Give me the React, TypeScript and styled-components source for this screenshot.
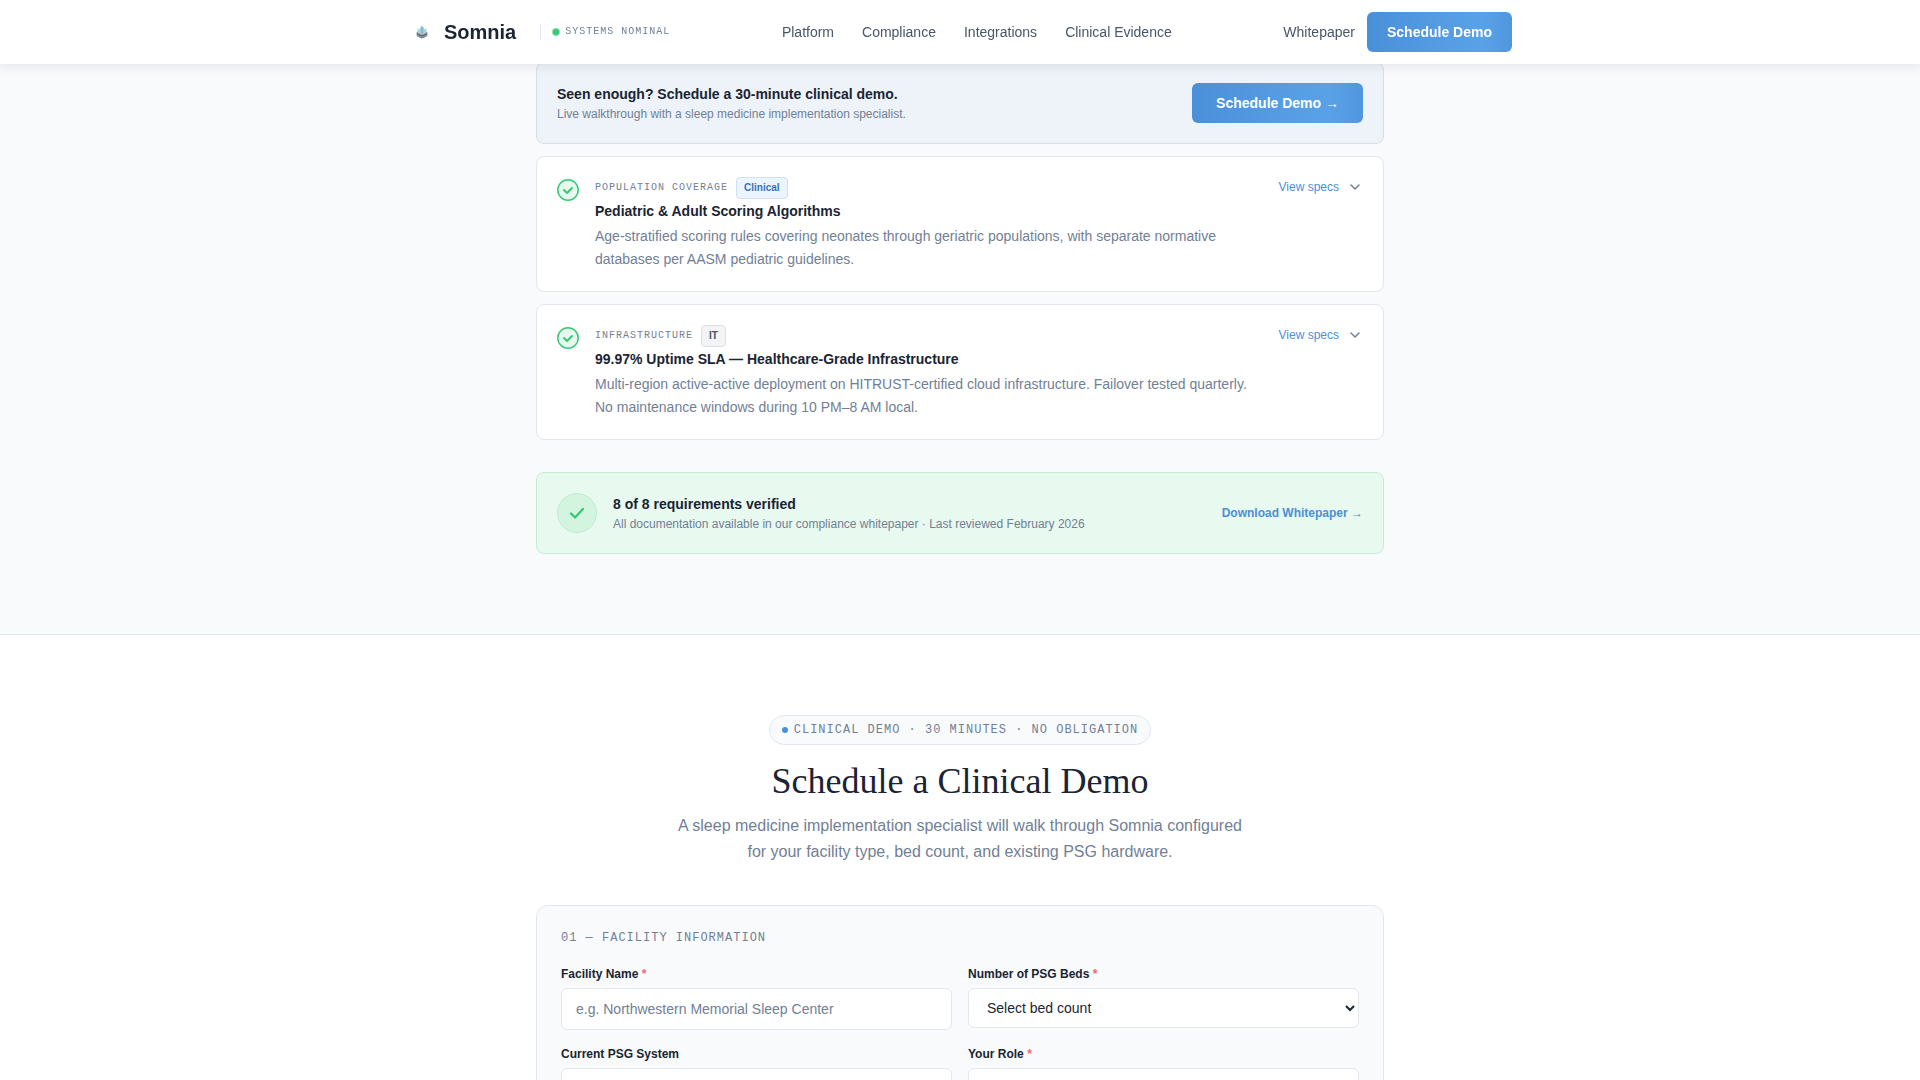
import React from "react";
import styled, { createGlobalStyle, css } from "styled-components";

const sans = `"Liberation Sans", Arial, sans-serif`;
const mono = `"Liberation Mono", "Courier New", monospace`;
const serif = `"Liberation Serif", "Times New Roman", serif`;

const color = {
  ink: "#1a2433",
  body: "#4a5568",
  muted: "#718096",
  line: "#e2e8ee",
  surface: "#f8fafc",
  blue: "#4a90d9",
  green: "#38c976",
};

const GlobalStyle = createGlobalStyle`
  *, *::before, *::after { box-sizing: border-box; }
  body { margin: 0; background: #fff; color: ${color.ink}; font-family: ${sans}; font-size: 14px; line-height: 20px; }
  h1, h2, h3, p { margin: 0; }
  a { color: inherit; text-decoration: none; }
  button, input, select { font-family: inherit; }
`;

const Header = styled.header`
  position: fixed;
  inset: 0 0 auto;
  z-index: 10;
  background: #fff;
  box-shadow: 0 1px 12px rgba(26, 32, 44, 0.12);
`;

const HeaderInner = styled.div`
  display: flex;
  align-items: center;
  justify-content: space-between;
  max-width: 1152px;
  height: 64px;
  margin: 0 auto;
  padding: 0 24px;
`;

const Group = styled.div`
  display: flex;
  align-items: center;
  gap: ${(p: { $gap: number }) => p.$gap}px;
`;

const Brand = styled.a`
  display: flex;
  align-items: center;
  gap: 8px;
  font-size: 20px;
  font-weight: 700;
`;

const monoLabel = css`
  font-family: ${mono};
  letter-spacing: 1px;
  text-transform: uppercase;
  color: ${color.muted};
`;

const Status = styled.div`
  ${monoLabel}
  display: flex;
  align-items: center;
  gap: 6px;
  padding-left: 12px;
  border-left: 1px solid ${color.line};
  font-size: 10px;
  line-height: 16px;
`;

const Dot = styled.span<{ $color: string; $halo?: boolean }>`
  width: 6px;
  height: 6px;
  border-radius: 50%;
  background: ${(p) => p.$color};
  box-shadow: ${(p) => (p.$halo ? "0 0 0 1px rgba(56, 201, 118, 0.6)" : "none")};
`;

const Nav = styled.nav`
  display: flex;
  gap: 28px;
  color: ${color.body};
`;

const TextLink = styled.a`
  color: ${color.body};
`;

const PrimaryButton = styled.button<{ $pad: number }>`
  height: 40px;
  padding: 0 ${(p) => p.$pad}px;
  border: 0;
  border-radius: 6px;
  background: linear-gradient(90deg, #4a90d9 0%, #5aa2e8 80%, #5096df 100%);
  color: #fff;
  font-size: 14px;
  font-weight: 700;
  white-space: nowrap;
  cursor: pointer;
`;

const Section = styled.section<{ $tinted?: boolean }>`
  padding: ${(p) => (p.$tinted ? "62px 0 80px" : "80px 0")};
  background: ${(p) => (p.$tinted ? color.surface : "#fff")};
  border-bottom: 1px solid ${color.line};
`;

const Column = styled.div`
  display: flex;
  flex-direction: column;
  gap: 12px;
  max-width: 896px;
  margin: 0 auto;
  padding: 0 24px;
`;

const Panel = styled.div<{ $tone: "blue" | "green" }>`
  display: flex;
  align-items: center;
  gap: 16px;
  padding: 20px;
  border: 1px solid ${(p) => (p.$tone === "blue" ? "#d5e0ea" : "#c3ecd3")};
  border-radius: 8px;
  background: ${(p) => (p.$tone === "blue" ? "#edf3f8" : "#e8f9ef")};
  margin-top: ${(p) => (p.$tone === "green" ? 20 : 0)}px;
`;

const PanelText = styled.div`
  display: flex;
  flex: 1;
  flex-direction: column;
  gap: 2px;
`;

const Title = styled.h3`
  font-size: 14px;
  line-height: 20px;
  font-weight: 700;
`;

const Note = styled.p`
  color: ${color.muted};
  font-size: 12px;
  line-height: 16px;
`;

const Seal = styled.span`
  display: grid;
  place-items: center;
  width: 40px;
  height: 40px;
  border: 1px solid #bdebd0;
  border-radius: 50%;
  background: #d3f5e0;
`;

const StrongLink = styled.a`
  color: ${color.blue};
  font-size: 12px;
  font-weight: 700;
`;

const Card = styled.article`
  display: flex;
  align-items: flex-start;
  gap: 16px;
  padding: 20px;
  border: 1px solid ${color.line};
  border-radius: 8px;
  background: #fff;
`;

const CheckMark = styled.svg`
  flex: none;
  margin-top: 2px;
`;

const CardBody = styled.div`
  flex: 1;
`;

const CardMeta = styled.div`
  display: flex;
  align-items: center;
  gap: 8px;
  margin-bottom: 2px;
`;

const Category = styled.span`
  ${monoLabel}
  font-size: 10px;
  line-height: 20px;
`;

const Tag = styled.span<{ $clinical?: boolean }>`
  padding: 0 7px;
  border: 1px solid ${(p) => (p.$clinical ? "#cfe1f6" : "#dcdfe4")};
  border-radius: 4px;
  background: ${(p) => (p.$clinical ? "#ebf4ff" : "#f3f4f6")};
  color: ${(p) => (p.$clinical ? "#3a70b2" : color.body)};
  font-size: 10px;
  line-height: 20px;
  font-weight: 700;
`;

const Description = styled.p`
  margin-top: 4px;
  color: ${color.muted};
  line-height: 23px;
`;

const SpecsButton = styled.button`
  display: flex;
  align-items: center;
  gap: 8px;
  padding: 0;
  border: 0;
  background: none;
  color: ${color.blue};
  font-size: 12px;
  line-height: 20px;
  cursor: pointer;
`;

const Intro = styled.div`
  display: flex;
  flex-direction: column;
  align-items: center;
  margin-bottom: 28px;
  text-align: center;
`;

const Pill = styled.div`
  ${monoLabel}
  display: flex;
  align-items: center;
  gap: 6px;
  padding: 4px 12px;
  border: 1px solid ${color.line};
  border-radius: 15px;
  background: ${color.surface};
  font-size: 12px;
  line-height: 20px;
`;

const Heading = styled.h2`
  margin: 16px 0 12px;
  font-family: ${serif};
  font-size: 36px;
  line-height: 40px;
  font-weight: 400;
`;

const Lead = styled.p`
  max-width: 576px;
  color: ${color.muted};
  font-size: 16px;
  line-height: 26px;
`;

const Form = styled.form`
  padding: 24px;
  border: 1px solid ${color.line};
  border-radius: 12px;
  background: ${color.surface};
`;

const FormHeading = styled.h3`
  ${monoLabel}
  margin-bottom: 20px;
  font-size: 12px;
  line-height: 16px;
  font-weight: 400;
`;

const FieldGrid = styled.div`
  display: grid;
  grid-template-columns: 1fr 1fr;
  gap: 16px;
`;

const FieldBox = styled.div`
  display: flex;
  flex-direction: column;
  gap: 6px;
`;

const Label = styled.label`
  font-size: 12px;
  line-height: 16px;
  font-weight: 700;
`;

const Required = styled.span`
  color: #f56570;
`;

const control = css`
  width: 100%;
  padding: 0 14px;
  border: 1px solid ${color.line};
  border-radius: 6px;
  background: #fff;
  color: ${color.ink};
  font-size: 14px;
`;

const Input = styled.input`
  ${control}
  height: 42px;
  &::placeholder {
    color: ${color.muted};
  }
`;

const Select = styled.select`
  ${control}
  height: 40px;
`;

function Logo() {
  return (
    <svg width="28" height="28" viewBox="0 0 28 28" aria-hidden="true">
      <path d="M8.5 14l5.5-2.5 5.500 2.500v4L14 20.500 8.500 18z" fill="#a3adb3" />
      <path d="M9 15l5 2.500 5-2.500v1.500L14 19l-5-2.500z" fill="#59636c" />
      <path d="M9.500 18l4.500 2 4.500-2" fill="none" stroke="#7c858c" />
      <path d="M14 7.500l2 3-2 5-2-5z" fill="#7cc0d2" />
      <path d="M9.500 10l3 2 .5 4-3-1.500zM18.500 10l-3 2-.5 4 3-1.500z" fill="#a5d3df" />
    </svg>
  );
}

function Tick() {
  return (
    <svg width="18" height="18" viewBox="0 0 18 18" fill="none" stroke={color.green} strokeWidth="2.4" strokeLinecap="round" strokeLinejoin="round" aria-hidden="true">
      <path d="M3 9.500l4 4 8-8.500" />
    </svg>
  );
}

interface Requirement {
  category: string;
  tag: string;
  title: string;
  text: string;
}

const requirements: Requirement[] = [
  {
    category: "Population Coverage",
    tag: "Clinical",
    title: "Pediatric & Adult Scoring Algorithms",
    text: "Age-stratified scoring rules covering neonates through geriatric populations, with separate normative databases per AASM pediatric guidelines.",
  },
  {
    category: "Infrastructure",
    tag: "IT",
    title: "99.97% Uptime SLA — Healthcare-Grade Infrastructure",
    text: "Multi-region active-active deployment on HITRUST-certified cloud infrastructure. Failover tested quarterly. No maintenance windows during 10 PM–8 AM local.",
  },
];

function RequirementCard({ item }: { item: Requirement }) {
  return (
    <Card>
      <CheckMark width="22" height="22" viewBox="0 0 22 22" fill="none" stroke={color.green} aria-hidden="true">
        <circle cx="11" cy="11" r="10.2" fill="#e8f9ef" strokeWidth="1.5" />
        <path d="M7 11l3 3 5-5" strokeWidth="2" strokeLinecap="round" strokeLinejoin="round" />
      </CheckMark>
      <CardBody>
        <CardMeta>
          <Category>{item.category}</Category>
          <Tag $clinical={item.tag === "Clinical"}>{item.tag}</Tag>
        </CardMeta>
        <Title>{item.title}</Title>
        <Description>{item.text}</Description>
      </CardBody>
      <SpecsButton type="button">
        View specs
        <svg width="16" height="16" viewBox="0 0 16 16" fill="none" stroke={color.muted} strokeWidth="1.5" strokeLinecap="round" strokeLinejoin="round" aria-hidden="true">
          <path d="M4 6l4 4 4-4" />
        </svg>
      </SpecsButton>
    </Card>
  );
}

interface FieldProps {
  id: string;
  label: string;
  required?: boolean;
  children: React.ReactNode;
}

function Field({ id, label, required, children }: FieldProps) {
  return (
    <FieldBox>
      <Label htmlFor={id}>
        {label} {required && <Required>*</Required>}
      </Label>
      {children}
    </FieldBox>
  );
}

export default function App() {
  return (
    <>
      <GlobalStyle />
      <Header>
        <HeaderInner>
          <Group $gap={24}>
            <Brand href="#">
              <Logo />
              Somnia
            </Brand>
            <Status>
              <Dot $color={color.green} $halo />
              Systems Nominal
            </Status>
          </Group>
          <Nav>
            <TextLink href="#platform">Platform</TextLink>
            <TextLink href="#compliance">Compliance</TextLink>
            <TextLink href="#integrations">Integrations</TextLink>
            <TextLink href="#evidence">Clinical Evidence</TextLink>
          </Nav>
          <Group $gap={12}>
            <TextLink href="#whitepaper">Whitepaper</TextLink>
            <PrimaryButton type="button" $pad={20}>Schedule Demo</PrimaryButton>
          </Group>
        </HeaderInner>
      </Header>
      <main>
        <Section $tinted id="compliance">
          <Column>
            <Panel $tone="blue">
              <PanelText>
                <Title>Seen enough? Schedule a 30-minute clinical demo.</Title>
                <Note>Live walkthrough with a sleep medicine implementation specialist.</Note>
              </PanelText>
              <PrimaryButton type="button" $pad={24}>Schedule Demo →</PrimaryButton>
            </Panel>
            {requirements.map((item) => (
              <RequirementCard key={item.category} item={item} />
            ))}
            <Panel $tone="green">
              <Seal>
                <Tick />
              </Seal>
              <PanelText>
                <Title>8 of 8 requirements verified</Title>
                <Note>All documentation available in our compliance whitepaper · Last reviewed February 2026</Note>
              </PanelText>
              <StrongLink href="#whitepaper">Download Whitepaper →</StrongLink>
            </Panel>
          </Column>
        </Section>
        <Section id="demo">
          <Column>
            <Intro>
              <Pill>
                <Dot $color={color.blue} />
                Clinical Demo · 30 Minutes · No Obligation
              </Pill>
              <Heading>Schedule a Clinical Demo</Heading>
              <Lead>
                A sleep medicine implementation specialist will walk through Somnia configured for your facility type, bed count, and existing PSG hardware.
              </Lead>
            </Intro>
            <Form>
              <FormHeading>01 — Facility Information</FormHeading>
              <FieldGrid>
                <Field id="facility" label="Facility Name" required>
                  <Input id="facility" placeholder="e.g. Northwestern Memorial Sleep Center" />
                </Field>
                <Field id="beds" label="Number of PSG Beds" required>
                  <Select id="beds">
                    <option>Select bed count</option>
                  </Select>
                </Field>
                <Field id="system" label="Current PSG System">
                  <Input id="system" />
                </Field>
                <Field id="role" label="Your Role" required>
                  <Input id="role" />
                </Field>
              </FieldGrid>
            </Form>
          </Column>
        </Section>
      </main>
    </>
  );
}
